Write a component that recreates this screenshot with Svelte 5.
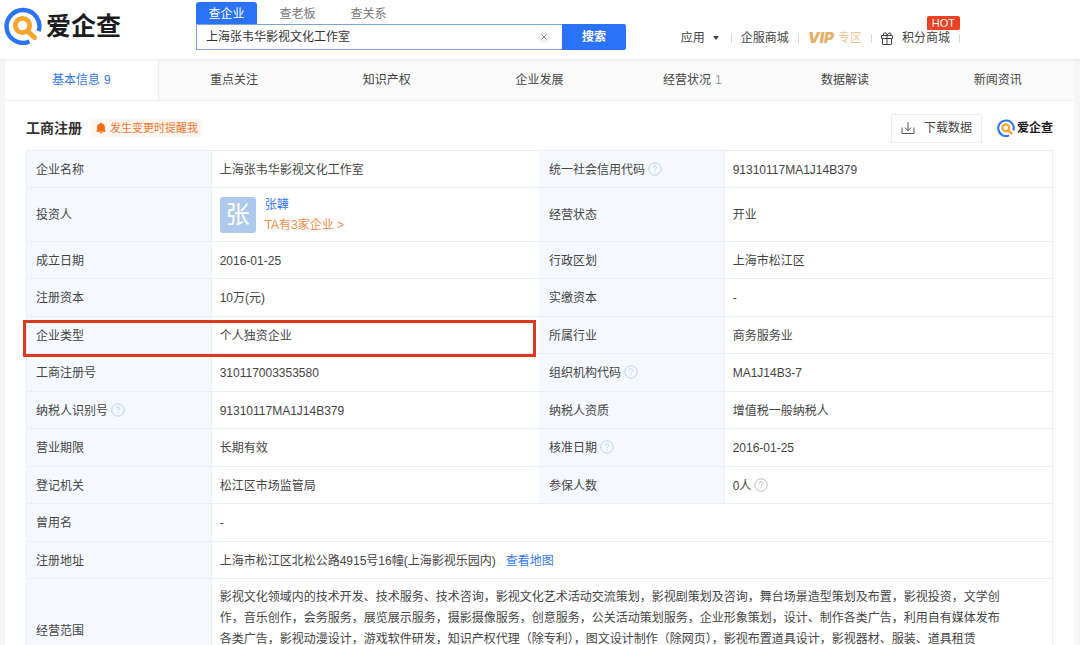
<script>
  const searchTabs = ['查企业', '查老板', '查关系'];
  const sections = [
    { name: '基本信息', count: '9' },
    { name: '重点关注' },
    { name: '知识产权' },
    { name: '企业发展' },
    { name: '经营状况', count: '1' },
    { name: '数据解读' },
    { name: '新闻资讯' }
  ];
  const rows = [
    [{ label: '企业名称', value: '上海张韦华影视文化工作室' }, { label: '统一社会信用代码', help: true, value: '91310117MA1J14B379' }],
    [{ label: '投资人', investor: { initial: '张', name: '张韡', more: 'TA有3家企业 >' } }, { label: '经营状态', value: '开业' }],
    [{ label: '成立日期', value: '2016-01-25' }, { label: '行政区划', value: '上海市松江区' }],
    [{ label: '注册资本', value: '10万(元)' }, { label: '实缴资本', value: '-' }],
    [{ label: '企业类型', value: '个人独资企业', marked: true }, { label: '所属行业', value: '商务服务业' }],
    [{ label: '工商注册号', value: '310117003353580' }, { label: '组织机构代码', help: true, value: 'MA1J14B3-7' }],
    [{ label: '纳税人识别号', help: true, value: '91310117MA1J14B379' }, { label: '纳税人资质', value: '增值税一般纳税人' }],
    [{ label: '营业期限', value: '长期有效' }, { label: '核准日期', help: true, value: '2016-01-25' }],
    [{ label: '登记机关', value: '松江区市场监管局' }, { label: '参保人数', value: '0人', valueHelp: true }],
    [{ label: '曾用名', value: '-' }],
    [{ label: '注册地址', value: '上海市松江区北松公路4915号16幢(上海影视乐园内)', map: '查看地图' }],
    [{ label: '经营范围', long: true, value: '影视文化领域内的技术开发、技术服务、技术咨询，影视文化艺术活动交流策划，影视剧策划及咨询，舞台场景造型策划及布置，影视投资，文学创作，音乐创作，会务服务，展览展示服务，摄影摄像服务，创意服务，公关活动策划服务，企业形象策划，设计、制作各类广告，利用自有媒体发布各类广告，影视动漫设计，游戏软件研发，知识产权代理（除专利），图文设计制作（除网页），影视布置道具设计，影视器材、服装、道具租赁' }]
  ];
  let query = $state('上海张韦华影视文化工作室');
</script>

{#snippet logo()}
  <svg viewBox="0 0 38 38" fill="none" aria-hidden="true">
    <path d="M25.500 34.500A16.400 16.400 0 1 1 34.700 24.200" stroke="#2b74f5" stroke-width="4.400" />
    <circle cx="18.500" cy="18.500" r="7.200" stroke="#f7a52b" stroke-width="4.800" />
    <path d="M24 24.500L30.500 30.500" stroke="#f7a52b" stroke-width="5" stroke-linecap="round" />
  </svg>
  <span>爱企查</span>
{/snippet}

{#snippet helpIcon(grey)}
  <svg class="help" class:grey viewBox="0 0 14 14" fill="none" stroke="currentColor" aria-hidden="true">
    <circle cx="7" cy="7" r="6.2" />
    <path d="M5.2 5.6C5.2 4.4 6 3.8 7 3.8s1.8.7 1.8 1.6c0 1.2-1.8 1.4-1.8 2.7M7 9.2v1.1" />
  </svg>
{/snippet}

<header>
  <a class="logo" href="#home">{@render logo()}</a>
  <form class="search" onsubmit={(e) => e.preventDefault()}>
    <div class="kinds">
      {#each searchTabs as tab, i}
        <button type="button" class:on={i === 0}>{tab}</button>
      {/each}
    </div>
    <div class="bar">
      <input type="text" aria-label="查企业" bind:value={query} />
      <button type="button" class="clear" aria-label="清除" onclick={() => (query = '')}>
        <svg viewBox="0 0 12 12" aria-hidden="true">
          <circle cx="6" cy="6" r="6" fill="#f2f2f2" />
          <path d="M3.5 3.5l5 5M8.5 3.5l-5 5" stroke="#888" />
        </svg>
      </button>
      <button class="go">搜索</button>
    </div>
  </form>
  <nav class="links">
    <a class="apps" href="#apps">应用<i class="caret"></i></a>
    <a href="#mall">企服商城</a>
    <a class="vip" href="#vip"><b>VIP</b>专区</a>
    <a class="points" href="#points">
      <svg viewBox="0 0 12 13" fill="none" stroke="#444" aria-hidden="true">
        <path d="M1 3.500h10a.5.5 0 0 1 .5.5v2.500H.5V4a.5.5 0 0 1 .5-.500zM1.500 6.500v5.500a.5.5 0 0 0 .5.500h8a.5.5 0 0 0 .5-.500V6.500M6 3.500v9M2.500 3.500V1.800Q2.500 1 3.300 1H5L6.500 3.500M6 3L8 1h1.200q.8 0 .8.800v1.700" />
      </svg>
      积分商城
      <span class="hot">HOT</span>
    </a>
  </nav>
</header>

<main>
  <nav class="sections">
    {#each sections as s, i}
      <a href="#section-{i}" class:on={i === 0}>{s.name}{#if s.count}<small>{s.count}</small>{/if}</a>
    {/each}
  </nav>

  <section>
    <div class="head">
      <h1>工商注册</h1>
      <button class="remind">
        <svg viewBox="0 0 12 12" fill="#f56b15" aria-hidden="true">
          <path d="M6 .6c.5 0 .8.3.8.8C8.700 1.800 9.900 3.300 9.900 5.200V8.200L11 9.700H1L2.100 8.200V5.200C2.100 3.300 3.300 1.800 5.200 1.400 5.200.900 5.500.600 6 .600zM4.600 10.300h2.800a1.400 1.200 0 0 1-2.800 0z" />
        </svg>
        发生变更时提醒我
      </button>
      <button class="download">
        <svg viewBox="0 0 14 14" fill="none" stroke="#555" aria-hidden="true">
          <path d="M1 6.500v6h12v-6M7 1v8.500M4 6.700l3 3 3-3" />
        </svg>
        下载数据
      </button>
      <span class="logo small">{@render logo()}</span>
    </div>

    <table>
      <colgroup><col class="k" /><col class="v" /><col class="k" /><col class="v" /></colgroup>
      <tbody>
        {#each rows as row}
          <tr class:marked={row[0].marked} class:tall={row[0].investor} class:scope={row[0].long}>
            {#each row as cell}
              <th scope="row">{cell.label}{#if cell.help}{@render helpIcon(false)}{/if}</th>
              <td colspan={row.length === 1 ? 3 : 1}>
                {#if cell.investor}
                  <div class="investor">
                    <span class="avatar">{cell.investor.initial}</span>
                    <div>
                      <a href="#investor">{cell.investor.name}</a>
                      <a class="more" href="#companies">{cell.investor.more}</a>
                    </div>
                  </div>
                {:else}
                  {cell.value}{#if cell.valueHelp}{@render helpIcon(true)}{/if}{#if cell.map}<a class="map" href="#map">{cell.map}</a>{/if}
                {/if}
              </td>
            {/each}
          </tr>
        {/each}
      </tbody>
    </table>
  </section>
</main>

<style>
  :global(body) {
    background: #f5f5f6;
    color: #444;
    font: 12px/20px "Liberation Sans", "Noto Sans CJK SC", sans-serif;
    overflow: hidden;
  }
  * { box-sizing: border-box; }
  a { color: inherit; text-decoration: none; }
  button { font: inherit; color: inherit; border: 0; padding: 0; background: none; cursor: pointer; }
  svg { display: block; flex: none; }

  header {
    position: relative;
    display: flex;
    align-items: flex-start;
    height: 59px;
    padding: 0 120px 0 4px;
    background: #fff;
    box-shadow: 0 1px 3px #00000012;
  }
  .logo {
    display: flex;
    align-items: center;
    gap: 4px;
    margin-top: 7px;
    color: #1c1c1c;
    font-size: 25px;
    font-weight: 700;
    line-height: 38px;
  }
  .logo :global(svg) { width: 38px; height: 38px; }
  .search { width: 430px; margin: 2px 0 0 75px; }
  .kinds { display: flex; gap: 10px; }
  .kinds button { width: 61px; height: 22px; line-height: 24px; color: #777; border-radius: 3px 3px 0 0; }
  .kinds .on { background: #2a73f6; color: #fff; }
  .bar { display: flex; height: 26px; }
  .bar input {
    flex: 1;
    min-width: 0;
    padding: 0 32px 0 9px;
    border: 1px solid #7ba4d8;
    border-right: 0;
    font: inherit;
    color: #333;
    outline: 0;
  }
  .clear { width: 12px; margin: 0 12px 0 -24px; }
  .clear svg { width: 12px; height: 12px; }
  .go { width: 64px; background: #2a73f6; color: #fff; font-weight: 700; border-radius: 0 2px 2px 0; }

  .links { display: flex; margin: 28px 0 0 auto; }
  .links a { position: relative; display: flex; align-items: center; padding-right: 10px; margin-right: 9px; }
  .links a:last-child { margin-right: 0; }
  .links a::after { content: ""; position: absolute; right: 0; width: 1px; height: 9px; background: #d5d5d5; }
  .caret { margin-left: 8px; border: 3px solid transparent; border-top: 4px solid #444; border-bottom: 0; }
  .links .apps { padding-right: 13px; }
  .links .vip { gap: 4px; color: #ecc795; }
  .vip b { color: #e2b06a; font: italic 900 15px/20px Inter, sans-serif; }
  .points { gap: 9px; }
  .points svg { width: 12px; height: 13px; }
  .hot {
    position: absolute;
    top: -12px;
    right: 0;
    padding: 0 5px;
    border-radius: 2px 2px 2px 0;
    background: #ee4023;
    color: #fff;
    font-size: 11px;
    line-height: 14px;
  }

  main { margin: 0 6px 0 5px; background: #fff; }
  .sections { display: flex; border-bottom: 1px solid #f2f2f2; background: #fafafa; }
  .sections a { flex: 1 1 0; min-width: 0; height: 41px; line-height: 43px; text-align: center; }
  .sections .on { flex-basis: -1px; background: #fff; color: #3478ee; box-shadow: 1px 0 #eee; }
  .sections small { margin-left: 4px; font-size: 12px; color: #999; }
  .sections .on small { color: inherit; }

  section { padding: 12px 21px 0; }
  .head { display: flex; align-items: center; height: 30px; margin-bottom: 7px; }
  h1 { margin: 0 9px 0 0; font-size: 14px; font-weight: 700; color: #333; }
  .remind {
    display: flex;
    align-items: center;
    gap: 3px;
    height: 18px;
    padding: 0 4px;
    background: #fff6f0;
    color: #f2762e;
    font-size: 11px;
    line-height: 20px;
  }
  .remind svg { width: 12px; height: 12px; }
  .download {
    display: flex;
    align-items: center;
    gap: 9px;
    height: 29px;
    margin-left: auto;
    padding: 0 9px;
    border: 1px solid #ebebeb;
  }
  .download svg { width: 14px; height: 14px; }
  .small { gap: 2px; margin: 0 0 0 15px; font-size: 12px; line-height: 20px; }
  .small :global(svg) { width: 18px; height: 18px; }

  table { width: 100%; table-layout: fixed; border-collapse: collapse; }
  .k { width: 18%; }
  .v { width: 32%; }
  tr { position: relative; height: 37px; }
  tr:nth-child(even) { height: 38px; }
  tr.tall { height: 54px; }
  th, td { padding: 1px 9px 0 8px; border: 1px solid #e9eff5; text-align: left; font-weight: 400; }
  th { padding-left: 9px; background: #f5f9ff; }
  td:nth-child(2) { border-right-color: #f5f9ff; }
  td[colspan="3"] { border-right-color: #e9eff5; }
  .help { display: inline-block; width: 14px; height: 14px; margin-left: 3px; vertical-align: -2px; color: #b9d2ee; }
  .help.grey { color: #bbb; }
  .marked::after {
    content: "";
    position: absolute;
    z-index: 1;
    inset: 3px calc(50% + 4px) -3px -4px;
    border: 3px solid #dc3a20;
  }
  .investor { display: flex; align-items: center; gap: 9px; }
  .avatar {
    width: 36px;
    height: 36px;
    border-radius: 3px;
    background: #afc9ec;
    color: #fff;
    font-size: 24px;
    line-height: 36px;
    text-align: center;
  }
  .investor a { display: block; color: #3478ee; }
  .investor .more { color: #f58a4a; }
  .map { margin-left: 10px; color: #3478ee; }
  tr.scope { height: 104px; }
  .scope td { padding: 8px 44px 8px 8px; line-height: 21px; vertical-align: top; }
</style>
